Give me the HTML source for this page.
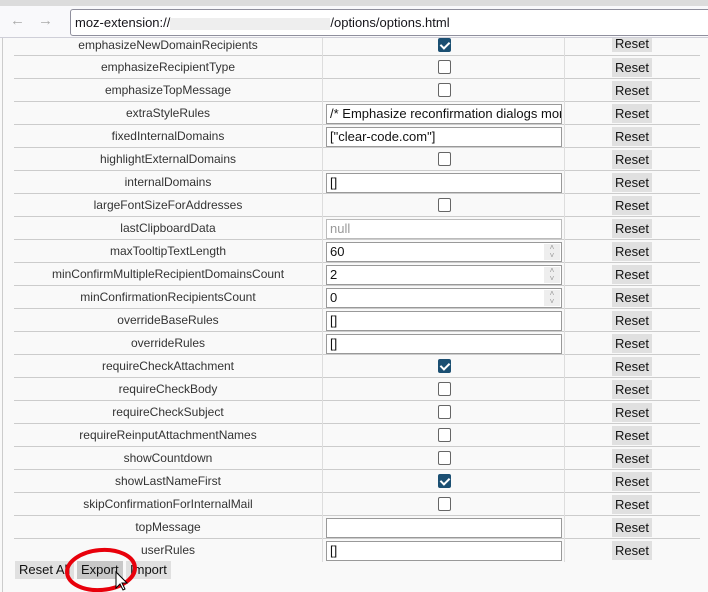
<!DOCTYPE html><html><head><meta charset="utf-8"><style>
*{margin:0;padding:0;box-sizing:border-box}
body{width:708px;height:592px;overflow:hidden;background:#f9f9f9;font-family:"Liberation Sans",sans-serif;font-size:12px;color:#222;position:relative}
.top{position:absolute;left:0;top:0;width:708px;height:6px;background:#dcdcdc}
.tb{position:absolute;left:0;top:6px;width:708px;height:32px;background:#f9f9fb;border-bottom:1px solid #cfcfd8}
.url{position:absolute;left:70px;top:9px;width:645px;height:27px;border:1px solid #8f8f9d;border-radius:3px;background:#fff;font-size:13px;line-height:25px;padding-left:4px;color:#15141a}
.blur{display:inline-block;width:160px;height:12px;background:#eee;vertical-align:middle}
.arr{position:absolute;top:6px;font-size:15px;color:#aaa}
.lb{position:absolute;left:2px;top:38px;width:1px;height:554px;background:#ccc}
.row{position:absolute;left:14px;width:686px;height:23px;border-bottom:1px solid #ccc}
.row.last{border-bottom:none}
.l{position:absolute;left:0;width:308px;text-align:center;line-height:23px;color:#333}
.v{position:absolute;left:308px;top:0;width:243px;height:23px;border-left:1px solid #ddd;border-right:1px solid #ddd}
.cb{position:absolute;left:115px;top:4px;width:13px;height:14px;border:1px solid #666;border-radius:2px;background:#fff}
.cb.on{background:#1b4f72;border-color:#1b4f72}
.cb.on::after{content:"";position:absolute;left:3px;top:1px;width:4px;height:7px;border:solid #fff;border-width:0 2px 2px 0;transform:rotate(45deg)}
.in{position:absolute;left:3px;top:2px;width:236px;height:20px;border:1px solid #999;background:#fff;font-size:13px;line-height:18px;padding-left:3px;white-space:nowrap;overflow:hidden;color:#111}
.sp{position:absolute;right:1px;top:1px;width:16px;height:16px;background:#eee;color:#999;font-size:8px;line-height:8px;text-align:center}
.rs{position:absolute;left:598px;top:2px;width:40px;height:19px;background:#e0e0e0;font-size:13px;line-height:19px;text-align:center;color:#111}
.bb{position:absolute;top:561px;height:18px;background:#e0e0e0;font-size:13px;line-height:18px;padding:0 4px;color:#111}
</style></head><body>
<div class="top"></div>
<div class="tb"><span class="arr" style="left:10px">←</span><span class="arr" style="left:38px">→</span></div>
<div class="url">moz-extension://<span class="blur"></span>/options/options.html</div>
<div class="lb"></div>
<div class="row" style="top:38px;height:18px"><div class="l" style="line-height:14px">emphasizeNewDomainRecipients</div><div class="v" style="height:18px"><div class="cb on" style="top:0"></div></div><div class="rs" style="top:0;height:14px;line-height:12px">Reset</div></div>
<div class="row" style="top:56px"><div class="l">emphasizeRecipientType</div><div class="v"><div class="cb"></div></div><div class="rs">Reset</div></div>
<div class="row" style="top:79px"><div class="l">emphasizeTopMessage</div><div class="v"><div class="cb"></div></div><div class="rs">Reset</div></div>
<div class="row" style="top:102px"><div class="l">extraStyleRules</div><div class="v"><div class="in">/* Emphasize reconfirmation dialogs more</div></div><div class="rs">Reset</div></div>
<div class="row" style="top:125px"><div class="l">fixedInternalDomains</div><div class="v"><div class="in">["clear-code.com"]</div></div><div class="rs">Reset</div></div>
<div class="row" style="top:148px"><div class="l">highlightExternalDomains</div><div class="v"><div class="cb"></div></div><div class="rs">Reset</div></div>
<div class="row" style="top:171px"><div class="l">internalDomains</div><div class="v"><div class="in">[]</div></div><div class="rs">Reset</div></div>
<div class="row" style="top:194px"><div class="l">largeFontSizeForAddresses</div><div class="v"><div class="cb"></div></div><div class="rs">Reset</div></div>
<div class="row" style="top:217px"><div class="l">lastClipboardData</div><div class="v"><div class="in" style="color:#999;border-color:#bbb">null</div></div><div class="rs">Reset</div></div>
<div class="row" style="top:240px"><div class="l">maxTooltipTextLength</div><div class="v"><div class="in">60<div class="sp">˄<br>˅</div></div></div><div class="rs">Reset</div></div>
<div class="row" style="top:263px"><div class="l">minConfirmMultipleRecipientDomainsCount</div><div class="v"><div class="in">2<div class="sp">˄<br>˅</div></div></div><div class="rs">Reset</div></div>
<div class="row" style="top:286px"><div class="l">minConfirmationRecipientsCount</div><div class="v"><div class="in">0<div class="sp">˄<br>˅</div></div></div><div class="rs">Reset</div></div>
<div class="row" style="top:309px"><div class="l">overrideBaseRules</div><div class="v"><div class="in">[]</div></div><div class="rs">Reset</div></div>
<div class="row" style="top:332px"><div class="l">overrideRules</div><div class="v"><div class="in">[]</div></div><div class="rs">Reset</div></div>
<div class="row" style="top:355px"><div class="l">requireCheckAttachment</div><div class="v"><div class="cb on"></div></div><div class="rs">Reset</div></div>
<div class="row" style="top:378px"><div class="l">requireCheckBody</div><div class="v"><div class="cb"></div></div><div class="rs">Reset</div></div>
<div class="row" style="top:401px"><div class="l">requireCheckSubject</div><div class="v"><div class="cb"></div></div><div class="rs">Reset</div></div>
<div class="row" style="top:424px"><div class="l">requireReinputAttachmentNames</div><div class="v"><div class="cb"></div></div><div class="rs">Reset</div></div>
<div class="row" style="top:447px"><div class="l">showCountdown</div><div class="v"><div class="cb"></div></div><div class="rs">Reset</div></div>
<div class="row" style="top:470px"><div class="l">showLastNameFirst</div><div class="v"><div class="cb on"></div></div><div class="rs">Reset</div></div>
<div class="row" style="top:493px"><div class="l">skipConfirmationForInternalMail</div><div class="v"><div class="cb"></div></div><div class="rs">Reset</div></div>
<div class="row" style="top:516px"><div class="l">topMessage</div><div class="v"><div class="in"></div></div><div class="rs">Reset</div></div>
<div class="row last" style="top:539px"><div class="l">userRules</div><div class="v"><div class="in">[]</div></div><div class="rs">Reset</div></div>
<div class="bb" style="left:15px">Reset All</div>
<div class="bb" style="left:77px;background:#c8c8c8">Export</div>
<div class="bb" style="left:126px">Import</div>
<svg style="position:absolute;left:0;top:0" width="708" height="592"><ellipse cx="101" cy="570" rx="34" ry="20" fill="none" stroke="#e8000b" stroke-width="4" transform="rotate(-5 101 570)"/><path d="M116 572 L116 588 L120 584 L123 590 L125 589 L122 583 L127 583 Z" fill="#fff" stroke="#000" stroke-width="1"/></svg>
</body></html>
